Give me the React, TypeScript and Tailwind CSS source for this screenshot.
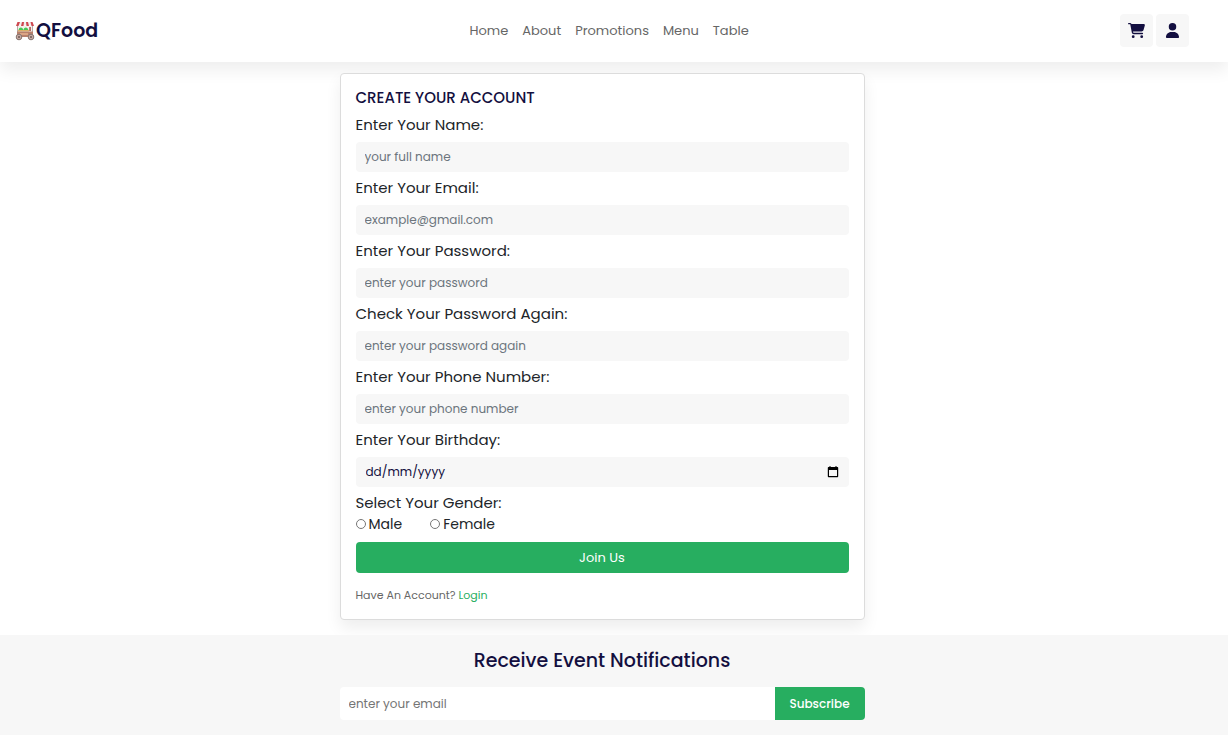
import React from "react";
import { FaCartShopping, FaUser } from "react-icons/fa6";

const navLinks = ["Home", "About", "Promotions", "Menu", "Table"];

const fields = [
  { id: "name", label: "Enter Your Name:", type: "text", placeholder: "your full name" },
  { id: "email", label: "Enter Your Email:", type: "email", placeholder: "example@gmail.com" },
  { id: "password", label: "Enter Your Password:", type: "password", placeholder: "enter your password" },
  { id: "confirm", label: "Check Your Password Again:", type: "password", placeholder: "enter your password again" },
  { id: "phone", label: "Enter Your Phone Number:", type: "tel", placeholder: "enter your phone number" },
];

function FoodCart() {
  return (
    <svg viewBox="0 0 20 20" className="size-5" aria-hidden="true">
      <path d="M2.500 4v9M17.500 4v9" stroke="#b5aaa6" strokeWidth="1" />
      <path d="M3 5h14v6H3z" fill="#f6efeb" />
      <path d="M3.500 9.500c0-4 4.500-4 5 0zM8.500 9.500c0-4 4.500-4 5 0z" fill="#45c957" />
      <path d="M3 9h11v1.500H3z" fill="#d8b068" />
      <path d="M14.300 6h1.500v4h-1.500z" fill="#a5483d" />
      <path d="M2 10.500h16V16H2z" fill="#b8806c" />
      <path d="M5 12h8v2H5z" fill="#dba585" />
      <path d="M2.500 1h15L19 4.500H1z" fill="#f1eeee" />
      <path
        d="M2.500 1H5L3.500 5H1zM7 1h2L8.500 5H6zM11 1h2l1 4h-2.500zM15.500 1h2L19 5h-2.500z"
        fill="#cf4850"
      />
      <g fill="#c7aaa3" stroke="#857570" strokeWidth="1">
        <circle cx="4" cy="16" r="2.800" />
        <circle cx="16" cy="16" r="2.800" />
      </g>
      <circle cx="4" cy="16" r="1" fill="#6c5854" />
      <circle cx="16" cy="16" r="1" fill="#6c5854" />
    </svg>
  );
}

function CalendarIcon() {
  return (
    <svg viewBox="0 0 12 12" className="size-3" aria-hidden="true">
      <path
        d="M2.500 0h1v1h5V0h1v1h.7c.7 0 1 .4 1 1v8.200c0 .6-.4 1-1 1H1.800c-.6 0-1-.4-1-1V2c0-.6.4-1 1-1h.7zM2 4v6h8V4z"
        fill="#000"
        fillRule="evenodd"
      />
    </svg>
  );
}

export default function App() {
  return (
    <div className="bg-white font-['Poppins','Inter',sans-serif] text-[#212529]">
      <header className="flex items-center justify-between bg-white pt-[14px] pr-[39px] pb-[15px] pl-[15px] shadow-[0_8px_16px_rgba(0,0,0,0.07)]">
        <a href="#home" className="flex items-center gap-px text-[19px] leading-7 font-semibold text-[#130f40]">
          <FoodCart />
          QFood
        </a>
        <nav className="flex gap-3.5 text-[13px] leading-5 text-[#666]">
          {navLinks.map((link) => (
            <a key={link} href={"#" + link.toLowerCase()}>
              {link}
            </a>
          ))}
        </nav>
        <div className="flex gap-[3px] text-[#130f40]">
          <button type="button" aria-label="Cart" className="grid size-[33px] place-items-center rounded bg-[#f7f7f7]">
            <FaCartShopping size={17} />
          </button>
          <button type="button" aria-label="Account" className="grid size-[33px] place-items-center rounded bg-[#f7f7f7]">
            <FaUser size={15} />
          </button>
        </div>
      </header>

      <main className="pt-[11px] pr-6 pb-[15px]">
        <form className="mx-auto max-w-[525px] rounded border border-[#dcdcdc] bg-white px-[15px] pt-3 pb-[14px] shadow-[0_8px_16px_rgba(0,0,0,0.07)]">
          <h1 className="mb-[3px] text-[15px] leading-6 font-medium text-[#130f40] uppercase">Create your account</h1>
          {fields.map((field) => (
            <div key={field.id} className="mb-1">
              <label htmlFor={field.id} className="mb-[5px] block text-[15px] leading-6">
                {field.label}
              </label>
              <input
                id={field.id}
                type={field.type}
                placeholder={field.placeholder}
                className="block h-[30px] w-full rounded bg-[#f7f7f7] px-[9px] text-xs text-[#130f40] placeholder:text-[#6c757d]"
              />
            </div>
          ))}
          <div className="mb-1">
            <label htmlFor="birthday" className="mb-[5px] block text-[15px] leading-6">
              Enter Your Birthday:
            </label>
            <div className="flex h-[30px] items-center rounded bg-[#f7f7f7] px-[10px]">
              <input
                id="birthday"
                type="text"
                placeholder="dd/mm/yyyy"
                className="min-w-0 flex-1 text-xs text-[#130f40] placeholder:text-[#130f40]"
              />
              <button type="button" aria-label="Pick a date">
                <CalendarIcon />
              </button>
            </div>
          </div>
          <fieldset>
            <legend className="text-[15px] leading-6">Select Your Gender:</legend>
            <div className="flex gap-7 text-sm leading-[18px]">
              <label className="flex items-center gap-[3px]">
                <input type="radio" name="gender" className="size-[10px]" />
                Male
              </label>
              <label className="flex items-center gap-[3px]">
                <input type="radio" name="gender" className="size-[10px]" />
                Female
              </label>
            </div>
          </fieldset>
          <button type="submit" className="mt-[9px] h-[31px] w-full rounded bg-[#27ae60] text-[13px] text-white">
            Join Us
          </button>
          <p className="mt-3 text-[11px] leading-5 text-[#666]">
            Have An Account?{" "}
            <a href="#login" className="text-[#27ae60]">
              Login
            </a>
          </p>
        </form>
      </main>

      <footer className="relative bg-[#f7f7f7] pt-3 pr-6 pb-[15px]">
        <h2 className="text-center text-[19px] leading-7 font-medium text-[#130f40]">Receive Event Notifications</h2>
        <form className="mx-auto mt-3 flex max-w-[525px] overflow-hidden rounded">
          <input
            type="email"
            aria-label="Email address"
            placeholder="enter your email"
            className="h-[33px] min-w-0 flex-1 bg-white px-[9px] text-xs placeholder:text-[#757575]"
          />
          <button type="submit" className="h-[33px] w-[90px] bg-[#27ae60] text-xs font-medium text-white">
            Subscribe
          </button>
        </form>
      </footer>
    </div>
  );
}
